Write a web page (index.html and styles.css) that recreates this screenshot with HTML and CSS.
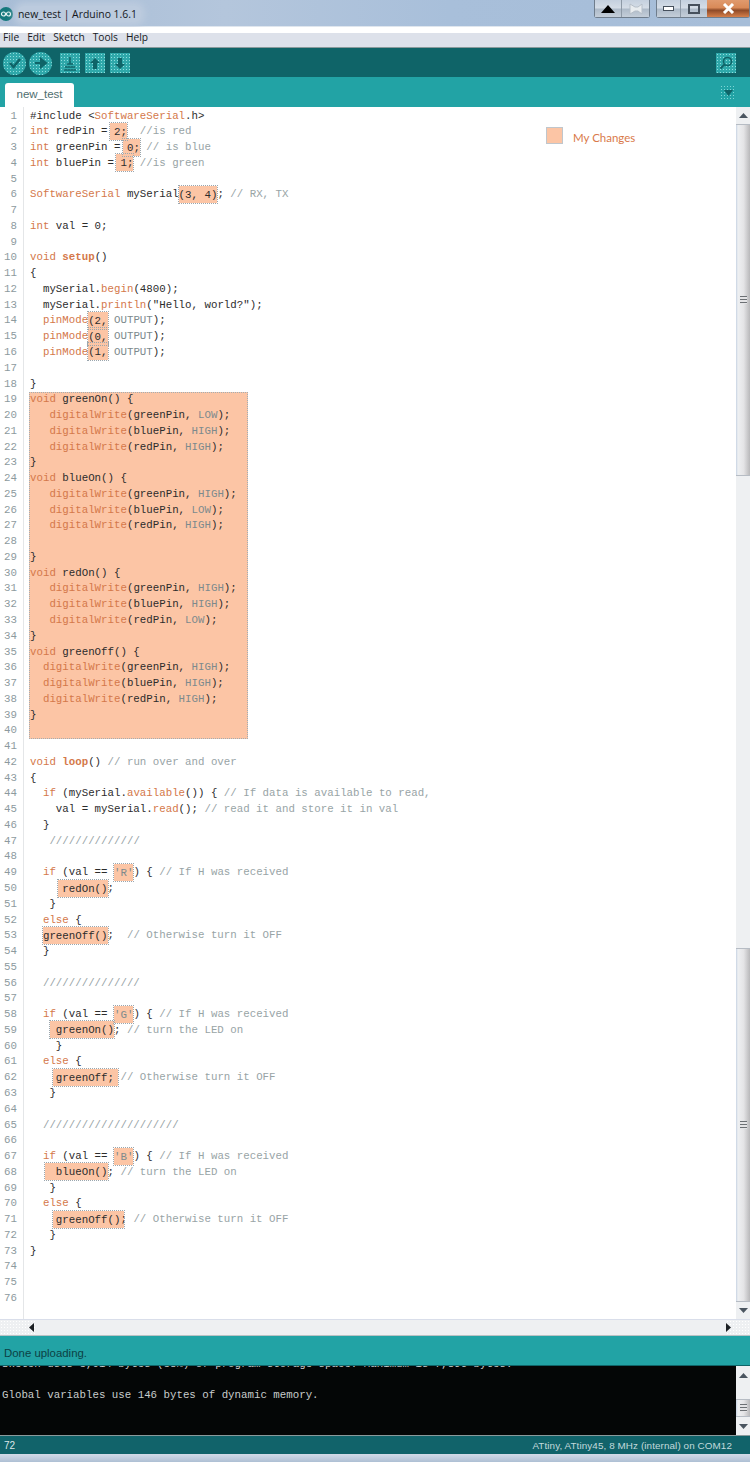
FILE: index.html
```html
<!DOCTYPE html>
<html lang="en">
<head>
<meta charset="utf-8">
<title>new_test | Arduino 1.6.1</title>
<link rel="stylesheet" href="styles.css">
</head>
<body>
<div class="window">
  <header class="titlebar">
    <svg class="applogo" width="14" height="14" viewBox="0 0 14 14"><circle cx="7" cy="7" r="7" fill="#14787c"/><circle cx="4.500" cy="7" r="2" fill="none" stroke="#e6f4f4" stroke-width="1.200"/><circle cx="9.500" cy="7" r="2" fill="none" stroke="#e6f4f4" stroke-width="1.200"/></svg>
    <span class="apptitle">new_test | Arduino 1.6.1</span>
    <div class="winctl">
      <div class="ctlgroup">
        <div class="ctl ctl-wide"><svg width="14" height="8" viewBox="0 0 14 8"><path d="M7 0 14 8H0Z" fill="#000"/></svg></div>
        <div class="ctl ctl-wide"><svg width="14" height="12" viewBox="0 0 14 12"><path d="M1 1 6 4H9L13 1V11L9 8H6L1 11Z" fill="#e8ecef" stroke="#b5bec8"/></svg></div>
      </div>
      <div class="ctlgroup">
        <div class="ctl ctl-min"><svg width="11" height="5" viewBox="0 0 11 5"><rect x="0.500" y="0.500" width="10" height="4" fill="#fff" stroke="#46505c"/></svg></div>
        <div class="ctl ctl-max"><svg width="12" height="10" viewBox="0 0 12 10"><rect x="1" y="1" width="10" height="8" fill="none" stroke="#46505c" stroke-width="2"/></svg></div>
        <div class="ctl ctl-close"><svg width="13" height="11" viewBox="0 0 13 11"><path d="M2 1 11 10M11 1 2 10" stroke="#fff" stroke-width="3"/></svg></div>
      </div>
    </div>
  </header>
  <nav class="menubar"><span>File</span><span>Edit</span><span>Sketch</span><span>Tools</span><span>Help</span></nav>
  <div class="toolbar">
    <div class="tool tool-round"><svg width="14" height="12" viewBox="0 0 14 12"><path d="M2 6 5.500 10 12 2" fill="none" stroke="#0f6468" stroke-width="2.600"/></svg></div>
    <div class="tool tool-round"><svg width="14" height="12" viewBox="0 0 14 12"><path d="M1 6H8M7 2 12 6 7 10Z" fill="#0f6468" stroke="#0f6468" stroke-width="2"/></svg></div>
    <div class="tool tool-first"><svg width="14" height="15" viewBox="0 0 14 15"><path d="M1 14H13M2 11H12M7 1V8M4 8H10" fill="none" stroke="#0f6468" stroke-width="1.600"/></svg></div>
    <div class="tool"><svg width="12" height="13" viewBox="0 0 12 13"><path d="M6 1 11 6H8V12H4V6H1Z" fill="#0f6468"/></svg></div>
    <div class="tool"><svg width="12" height="13" viewBox="0 0 12 13"><path d="M6 12 11 7H8V1H4V7H1Z" fill="#0f6468"/></svg></div>
    <div class="tool tool-search"><svg width="14" height="14" viewBox="0 0 14 14"><circle cx="8.500" cy="5.500" r="4" fill="none" stroke="#0f6468" stroke-width="1.600"/><path d="M5.500 8.500 1.500 12.500" stroke="#0f6468" stroke-width="2"/></svg></div>
  </div>
  <div class="tabbar">
    <div class="tab">new_test</div>
    <div class="tabmenu"><svg width="9" height="6" viewBox="0 0 9 6"><path d="M0 0H9L4.500 6Z" fill="#0f6468"/></svg></div>
  </div>
  <main class="editor">
    <div class="gutter">
      <div>1</div><div>2</div><div>3</div><div>4</div><div>5</div><div>6</div><div>7</div><div>8</div><div>9</div><div>10</div>
      <div>11</div><div>12</div><div>13</div><div>14</div><div>15</div><div>16</div><div>17</div><div>18</div><div>19</div><div>20</div>
      <div>21</div><div>22</div><div>23</div><div>24</div><div>25</div><div>26</div><div>27</div><div>28</div><div>29</div><div>30</div>
      <div>31</div><div>32</div><div>33</div><div>34</div><div>35</div><div>36</div><div>37</div><div>38</div><div>39</div><div>40</div>
      <div>41</div><div>42</div><div>43</div><div>44</div><div>45</div><div>46</div><div>47</div><div>48</div><div>49</div><div>50</div>
      <div>51</div><div>52</div><div>53</div><div>54</div><div>55</div><div>56</div><div>57</div><div>58</div><div>59</div><div>60</div>
      <div>61</div><div>62</div><div>63</div><div>64</div><div>65</div><div>66</div><div>67</div><div>68</div><div>69</div><div>70</div>
      <div>71</div><div>72</div><div>73</div><div>74</div><div>75</div><div>76</div>
    </div>
    <div class="code">
<div class="ln">#include &lt;<span class="k">SoftwareSerial</span>.h&gt;</div>
<div class="ln"><span class="k">int</span> redPin = <span class="hl hl-l4">2;</span>  <span class="c">//is red</span></div>
<div class="ln"><span class="k">int</span> greenPin = <span class="hl hl-l4">0;</span> <span class="c">// is blue</span></div>
<div class="ln"><span class="k">int</span> bluePin = <span class="hl hl-l4">1;</span> <span class="c">//is green</span></div>
<div class="ln"></div>
<div class="ln"><span class="k">SoftwareSerial</span> mySerial<span class="hl">(3, 4)</span>; <span class="c">// RX, TX</span></div>
<div class="ln"></div>
<div class="ln"><span class="k">int</span> val = 0;</div>
<div class="ln"></div>
<div class="ln"><span class="k">void</span> <span class="f">setup</span>()</div>
<div class="ln">{</div>
<div class="ln">  mySerial.<span class="k">begin</span>(4800);</div>
<div class="ln">  mySerial.<span class="k">println</span>("Hello, world?");</div>
<div class="ln">  <span class="k">pinMode</span><span class="hl">(2,</span> <span class="s">OUTPUT</span>);</div>
<div class="ln">  <span class="k">pinMode</span><span class="hl">(0,</span> <span class="s">OUTPUT</span>);</div>
<div class="ln">  <span class="k">pinMode</span><span class="hl">(1,</span> <span class="s">OUTPUT</span>);</div>
<div class="ln"></div>
<div class="ln">}</div>
<div class="changed">
<div class="ln"><span class="k">void</span> greenOn() {</div>
<div class="ln">   <span class="k">digitalWrite</span>(greenPin, <span class="s">LOW</span>);</div>
<div class="ln">   <span class="k">digitalWrite</span>(bluePin, <span class="s">HIGH</span>);</div>
<div class="ln">   <span class="k">digitalWrite</span>(redPin, <span class="s">HIGH</span>);</div>
<div class="ln">}</div>
<div class="ln"><span class="k">void</span> blueOn() {</div>
<div class="ln">   <span class="k">digitalWrite</span>(greenPin, <span class="s">HIGH</span>);</div>
<div class="ln">   <span class="k">digitalWrite</span>(bluePin, <span class="s">LOW</span>);</div>
<div class="ln">   <span class="k">digitalWrite</span>(redPin, <span class="s">HIGH</span>);</div>
<div class="ln"></div>
<div class="ln">}</div>
<div class="ln"><span class="k">void</span> redOn() {</div>
<div class="ln">   <span class="k">digitalWrite</span>(greenPin, <span class="s">HIGH</span>);</div>
<div class="ln">   <span class="k">digitalWrite</span>(bluePin, <span class="s">HIGH</span>);</div>
<div class="ln">   <span class="k">digitalWrite</span>(redPin, <span class="s">LOW</span>);</div>
<div class="ln">}</div>
<div class="ln"><span class="k">void</span> greenOff() {</div>
<div class="ln">  <span class="k">digitalWrite</span>(greenPin, <span class="s">HIGH</span>);</div>
<div class="ln">  <span class="k">digitalWrite</span>(bluePin, <span class="s">HIGH</span>);</div>
<div class="ln">  <span class="k">digitalWrite</span>(redPin, <span class="s">HIGH</span>);</div>
<div class="ln">}</div>
<div class="ln"></div>
</div>
<div class="ln"></div>
<div class="ln"><span class="k">void</span> <span class="f">loop</span>() <span class="c">// run over and over</span></div>
<div class="ln">{</div>
<div class="ln">  <span class="k">if</span> (mySerial.<span class="k">available</span>()) { <span class="c">// If data is available to read,</span></div>
<div class="ln">    val = mySerial.<span class="k">read</span>(); <span class="c">// read it and store it in val</span></div>
<div class="ln">  }</div>
<div class="ln">   <span class="c">//////////////</span></div>
<div class="ln"></div>
<div class="ln">  <span class="k">if</span> (val == <span class="hl"><span class="s">'R'</span></span>) { <span class="c">// If H was received</span></div>
<div class="ln">     <span class="hl hl-l4">redOn()</span>;</div>
<div class="ln">   }</div>
<div class="ln">  <span class="k">else</span> {</div>
<div class="ln">  <span class="hl">greenOff()</span>;  <span class="c">// Otherwise turn it OFF</span></div>
<div class="ln">  }</div>
<div class="ln"></div>
<div class="ln">  <span class="c">///////////////</span></div>
<div class="ln"></div>
<div class="ln">  <span class="k">if</span> (val == <span class="hl"><span class="s">'G'</span></span>) { <span class="c">// If H was received</span></div>
<div class="ln">    <span class="hl hl-l6">greenOn()</span>; <span class="c">// turn the LED on</span></div>
<div class="ln">    }</div>
<div class="ln">  <span class="k">else</span> {</div>
<div class="ln">    <span class="hl hl-both">greenOff;</span> <span class="c">// Otherwise turn it OFF</span></div>
<div class="ln">   }</div>
<div class="ln"></div>
<div class="ln">  <span class="c">/////////////////////</span></div>
<div class="ln"></div>
<div class="ln">  <span class="k">if</span> (val == <span class="hl"><span class="s">'B'</span></span>) { <span class="c">// If H was received</span></div>
<div class="ln">    <span class="hl hl-l11">blueOn()</span>; <span class="c">// turn the LED on</span></div>
<div class="ln">   }</div>
<div class="ln">  <span class="k">else</span> {</div>
<div class="ln">    <span class="hl hl-both">greenOff()</span>; <span class="c">// Otherwise turn it OFF</span></div>
<div class="ln">   }</div>
<div class="ln">}</div>
<div class="ln"></div>
<div class="ln"></div>
<div class="ln"></div>
    </div>
    <div class="legend"><span class="swatch"></span><span class="legend-text">My Changes</span></div>
    <div class="vscroll">
      <div class="arrow"><svg width="9" height="5" viewBox="0 0 9 5"><path d="M4.500 0 9 5H0Z" fill="#4a5560"/></svg></div>
      <div class="thumb thumb-a"><span class="grip"></span></div>
      <div class="track"></div>
      <div class="thumb thumb-b"><span class="grip"></span></div>
      <div class="arrow"><svg width="9" height="5" viewBox="0 0 9 5"><path d="M4.500 5 9 0H0Z" fill="#4a5560"/></svg></div>
    </div>
  </main>
  <div class="hscroll">
    <div class="hcap"><svg width="5" height="9" viewBox="0 0 5 9"><path d="M0 4.500 5 0V9Z" fill="#1c2024"/></svg></div>
    <div class="hcap hcap-right"><svg width="5" height="9" viewBox="0 0 5 9"><path d="M5 4.500 0 0V9Z" fill="#1c2024"/></svg></div>
  </div>
  <div class="status">Done uploading.</div>
  <section class="console">
    <div class="output">
      <div class="ln">Sketch uses 3,014 bytes (38%) of program storage space. Maximum is 7,896 bytes.</div>
      <div class="ln"></div>
      <div class="ln">Global variables use 146 bytes of dynamic memory.</div>
    </div>
    <div class="vscroll vscroll-console">
      <div class="arrow"><svg width="9" height="5" viewBox="0 0 9 5"><path d="M4.500 0 9 5H0Z" fill="#4a5560"/></svg></div>
      <div class="track"></div>
      <div class="thumb thumb-c"><span class="grip"></span></div>
      <div class="arrow"><svg width="9" height="5" viewBox="0 0 9 5"><path d="M4.500 5 9 0H0Z" fill="#4a5560"/></svg></div>
    </div>
  </section>
  <footer class="footbar"><span>72</span><span class="board">ATtiny, ATtiny45, 8 MHz (internal) on COM12</span></footer>
  <div class="winframe"></div>
</div>
</body>
</html>
```

FILE: styles.css
```css
* { box-sizing: border-box; }
html, body { margin: 0; padding: 0; }
body { width: 750px; height: 1462px; overflow: hidden; background: #fff; font-family: "Liberation Sans", Arial, sans-serif; }
.window { display: flex; flex-direction: column; width: 750px; height: 1462px; }

.titlebar { flex: 0 0 27px; display: flex; align-items: flex-start; background: linear-gradient(90deg, #a8bdd6 0%, #b4c6dc 30%, #a8bfda 60%, #a6bdd8 100%); border-bottom: 1px solid #dfe6ee; }
.applogo { margin: 7px 0 0 -1px; flex: none; }
.apptitle { margin: 6px 0 0 5px; padding-right: 4px; font-family: "Open Sans", sans-serif; font-size: 10.400px; line-height: 16px; color: #14181c; background: #bccbde; box-shadow: 0 0 6px 4px #bccbde; border-radius: 6px; }
.winctl { margin-left: auto; display: flex; gap: 6px; align-items: flex-start; }
.ctlgroup { display: flex; height: 18px; border: 1px solid #6f7d8c; border-top: 0; border-radius: 0 0 3px 3px; }
.ctl { display: flex; align-items: center; justify-content: center; background: linear-gradient(#c4d0de, #d4dce6 45%, #aebbc9 55%, #c4ced9); }
.ctl-wide { width: 27px; border-right: 1px solid #8d99a6; }
.ctl-wide:last-child { border-right: 0; }
.ctl-min { width: 24px; border-right: 1px solid #8d99a6; }
.ctl-max { width: 26px; }
.ctl-close { width: 42px; background: linear-gradient(#e09a6e, #d98a58 45%, #8e4a28 60%, #d67f4a); }

.menubar { flex: 0 0 20px; display: flex; gap: 8px; padding: 2px 0 0 3px; background: linear-gradient(#fff 0, #fff 6px, #dde1ea 6px); font-family: "Open Sans", sans-serif; font-size: 10.200px; line-height: 16px; color: #16191d; }

.toolbar { flex: 0 0 30px; display: flex; align-items: center; gap: 5px; padding: 1px 0 0 3px; background: #0f6468; border-top: 1px solid #8a9a9c; }
.tool { width: 20px; height: 20px; display: flex; align-items: center; justify-content: center; background-color: #2fa8aa; background-image: radial-gradient(#8fdede 40%, transparent 46%); background-size: 3px 3px; }
.tool-round { width: 23px; height: 23px; border-radius: 50%; }
.tool-round + .tool-round { margin-left: -2px; }
.tool-first { margin-left: 3px; }
.tool-search { margin-left: auto; margin-right: 14px; }

.tabbar { flex: 0 0 30px; display: flex; align-items: flex-end; justify-content: space-between; padding-left: 5px; background: #22a3a5; }
.tab { width: 69px; height: 24px; background: #fff; border-radius: 3px 3px 0 0; font-size: 11.500px; line-height: 22px; text-align: center; color: #4f6e70; }
.tabmenu { align-self: flex-start; width: 16px; height: 16px; margin: 8px 14px 0 0; display: flex; align-items: center; justify-content: center; background-image: radial-gradient(#7fd6d6 38%, transparent 44%); background-size: 3px 3px; }

.editor { position: relative; flex: 0 0 1213px; display: flex; background: #fff; border-bottom: 1px solid #d9deea; overflow: hidden; }
.gutter, .code, .output { font-family: "Liberation Mono", "Courier New", monospace; font-size: 10.780px; }
.gutter { flex: 0 0 24px; border-right: 1px solid #e4e6e8; padding: 1.500px 6px 0 0; text-align: right; color: #8d9a9e; }
.gutter div { height: 15.780px; line-height: 15.780px; }
.code { flex: 1; padding: 1.500px 0 0 6px; color: #2c2c2c; }
.ln { height: 15.780px; line-height: 15.780px; white-space: pre; }
.k { color: #d4784a; }
.f { color: #d4784a; font-weight: 700; }
.c { color: #98a4a6; }
.s { color: #7d8a8d; }
.hl { background: #fcc5a5; outline: 1px dotted #9aa6ae; padding: 2.500px 0; }
.hl-l4 { padding-left: 4px; margin-left: -4px; }
.hl-l6 { padding-left: 6px; margin-left: -6px; }
.hl-l11 { padding-left: 11px; margin-left: -11px; }
.hl-both { padding-left: 3px; padding-right: 4px; margin-left: -3px; margin-right: -4px; }
.changed { width: 219px; margin-left: -1px; padding-left: 1px; background: #fcc5a5; outline: 1px dotted #a3adb3; outline-offset: -1px; }

.legend { position: absolute; left: 546px; top: 20px; display: flex; align-items: center; gap: 10px; font-family: "Lato", sans-serif; font-size: 11.500px; color: #d9794a; }
.legend-text { margin-top: 4px; }
.swatch { width: 17px; height: 17px; background: #fcc5a5; border: 1px solid #c0c6cc; }

.vscroll { flex: 0 0 14px; display: flex; flex-direction: column; background: #eef0f2; }
.arrow { flex: 0 0 17px; display: flex; align-items: center; justify-content: center; }
.track { flex: 1; }
.thumb { display: flex; align-items: center; justify-content: center; background: linear-gradient(90deg, #c7d3e3 0, #eef0f2 2px, #e4e4e6 55%, #b8b8ba 100%); border-top: 1px solid #b6bcc4; border-bottom: 1px solid #b6bcc4; }
.thumb-a { flex: 0 0 352px; }
.thumb-b { flex: 0 0 354px; }
.thumb-c { flex: 0 0 18px; }
.grip { width: 7px; height: 8px; background: repeating-linear-gradient(#6c7074 0 1px, #e4e4e6 1px 3px); }

.hscroll { flex: 0 0 15px; display: flex; justify-content: space-between; background: #eef0f2; }
.hcap { width: 36px; display: flex; align-items: center; justify-content: flex-end; background-image: radial-gradient(#fff 38%, transparent 44%); background-size: 3px 3px; padding-right: 2px; }
.hcap-right { width: 24px; justify-content: flex-start; padding: 0; }

.status { flex: 0 0 31px; padding: 5px 0 0 4px; background: #22a3a5; border-top: 1px solid #b9c2c4; border-bottom: 1px solid #0f6468; font-size: 11.400px; line-height: 24px; color: #0c4144; }

.console { flex: 0 0 69px; display: flex; background: #040606; overflow: hidden; }
.output { flex: 1; margin-top: -9.500px; padding-left: 2px; color: #c8cccc; }
.vscroll-console .arrow { flex-basis: 18px; }

.footbar { flex: 0 0 19px; display: flex; justify-content: space-between; padding: 1px 18px 0 4px; background: #11636a; border-top: 1px solid #8a9a9c; font-size: 10px; line-height: 17px; color: #dbe7e8; }
.board { font-size: 9.850px; letter-spacing: 0.100px; color: #c2dadc; }

.winframe { flex: 1; background: linear-gradient(#d3dbe8, #aebfd4); }
```
